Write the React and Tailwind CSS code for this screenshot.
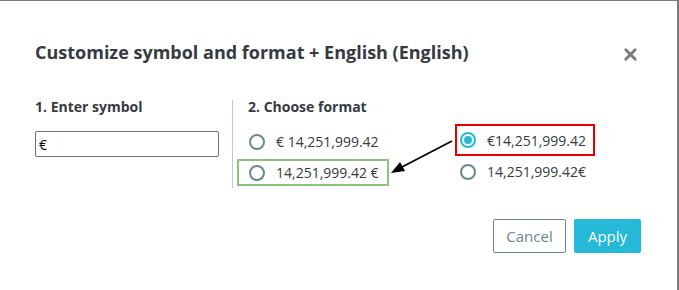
import { X } from "lucide-react";

// Radio de formato (marcado o no)
const Radio = ({ checked }) =>
  checked ? (
    <span className="w-4 h-4 rounded-full border-2 border-[#25b9d7] flex items-center justify-center shrink-0">
      <span className="w-2 h-2 rounded-full bg-[#25b9d7]" />
    </span>
  ) : (
    <span className="w-4 h-4 rounded-full border-2 border-[#6c868e] shrink-0" />
  );

const Option = ({ label, checked, className }) => (
  <label className={`flex items-center border-2 text-[14px] text-[#363a41] ${className}`}>
    <Radio checked={checked} />
    <span className="ml-[11px] whitespace-nowrap">{label}</span>
  </label>
);

export default function App() {
  return (
    <div className="relative w-[679px] h-[290px] bg-[#7a7a7a] font-['Open_Sans',sans-serif] overflow-hidden">
      <div className="bg-white w-[677px] h-[289px] mt-px">
        {/* Header */}
        <div className="flex items-center justify-between pl-[35px] pr-[37px] pt-[39px]">
          <h1 className="text-[18px] leading-[24px] font-bold text-[#363a41]">
            Customize symbol and format + English (English)
          </h1>
          <X size={19} strokeWidth={3.6} className="text-[#7a7a7a] mt-[4px]" />
        </div>

        {/* Body */}
        <div className="flex pl-[35px] mt-[33px]">
          <div className="w-[184px]">
            <p className="text-[14px] leading-[20px] font-bold text-[#363a41]">1. Enter symbol</p>
            <input
              defaultValue="€"
              className="mt-[14px] w-[184px] h-[26px] border border-[#6f6f6f] rounded-[2px] px-[3px] text-[14px] text-black outline-none"
            />
          </div>

          <div className="ml-[13px] mt-[3px] w-px h-[88px] bg-[#bbcdd2]" />

          <div className="flex flex-col">
            <p className="ml-[15px] text-[14px] leading-[20px] font-bold text-[#363a41]">2. Choose format</p>
            <div className="flex ml-[4px]">
              <div className="flex flex-col gap-[4px] mt-[11px] w-[152px]">
                <Option label="€ 14,251,999.42" className="h-[27px] pl-[10px] border-transparent" />
                <Option label="14,251,999.42 €" className="h-[27px] pl-[10px] border-[#8cc27a]" />
              </div>
              <div className="flex flex-col ml-[66px] mt-[7px]">
                <Option label="€14,251,999.42" checked className="h-[32px] w-[140px] pl-[3px] border-[#e60000]" />
                <Option label="14,251,999.42€" className="h-[27px] mt-[2px] pl-[3px] border-transparent" />
              </div>
            </div>
          </div>
        </div>

        {/* Footer */}
        <div className="flex justify-end gap-[8px] pr-[36px] mt-[31px]">
          <button className="h-[34px] w-[73px] border border-[#6c868e] rounded-[2px] text-[15px] text-[#6c868e]">
            Cancel
          </button>
          <button className="h-[34px] w-[67px] bg-[#25b9d7] rounded-[2px] text-[15px] text-white">
            Apply
          </button>
        </div>
      </div>

      {/* Flecha de anotación */}
      <svg className="absolute inset-0 pointer-events-none" width="679" height="290">
        <line x1="452" y1="141" x2="402" y2="167" stroke="#000" strokeWidth="1.8" />
        <polygon points="391,173 400,162 405,171" fill="#000" />
      </svg>
    </div>
  );
}
